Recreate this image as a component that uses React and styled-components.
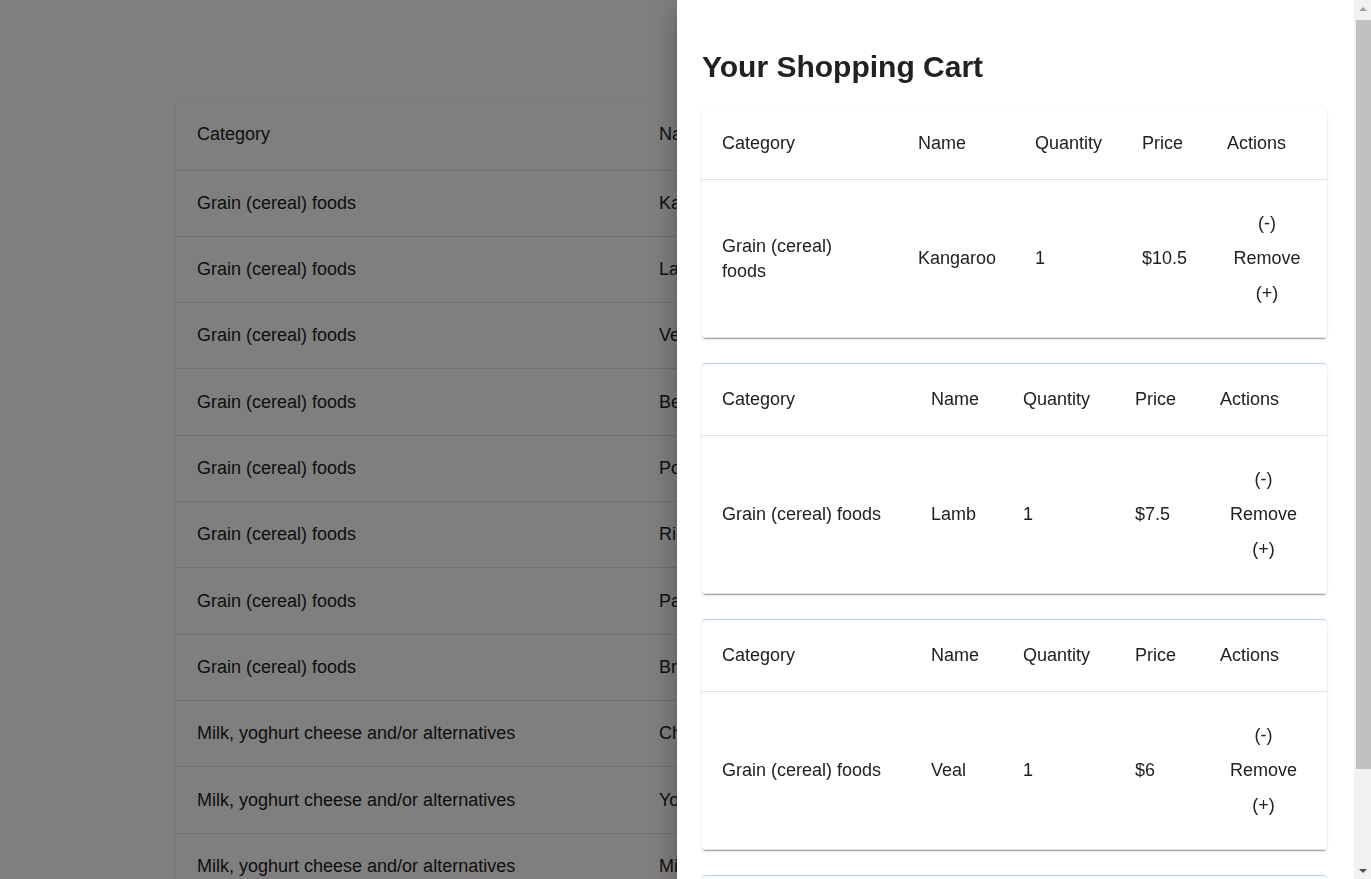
import React from "react";
import styled, { createGlobalStyle } from "styled-components";

const GlobalStyle = createGlobalStyle`
  html, body { margin: 0; padding: 0; height: 100%; overflow: hidden; }
  body {
    font-family: "Liberation Sans", Arial, sans-serif;
    background: #ffffff;
    color: rgba(0, 0, 0, 0.87);
  }
`;

const Page = styled.div`
  padding: 100px 0 0 176px;
`;

const BgPaper = styled.div`
  width: 1019px;
  background: #fff;
  border-radius: 4px;
  box-shadow: 0px 2px 1px -1px rgba(0,0,0,0.2), 0px 1px 1px 0px rgba(0,0,0,0.14), 0px 1px 3px 0px rgba(0,0,0,0.12);
  overflow: hidden;
`;

const Table = styled.table`
  width: 100%;
  border-collapse: collapse;
  table-layout: fixed;
  font-size: 18px;
  line-height: 25px;
`;

const BgHeadCell = styled.th`
  height: 70px;
  box-sizing: border-box;
  padding: 0 21px;
  text-align: left;
  font-weight: 400;
  border-bottom: 1px solid #e0e0e0;
  white-space: nowrap;
  color: #212121;
`;

const BgCell = styled.td`
  height: 66.33px;
  box-sizing: border-box;
  padding: 0 21px;
  border-bottom: 1px solid #e0e0e0;
  white-space: nowrap;
  overflow: hidden;
  color: #212121;
`;

const Backdrop = styled.div`
  position: fixed;
  inset: 0;
  background: rgba(0, 0, 0, 0.5);
`;

const Drawer = styled.aside`
  position: fixed;
  top: 0;
  right: 0;
  bottom: 0;
  width: 694px;
  display: flex;
  background: #fff;
  box-shadow: 0px 8px 10px -5px rgba(0,0,0,0.2), 0px 16px 24px 2px rgba(0,0,0,0.14), 0px 6px 30px 5px rgba(0,0,0,0.12);
`;

const DrawerBody = styled.div`
  flex: 1;
  min-width: 0;
  box-sizing: border-box;
  overflow-y: auto;
  scrollbar-width: none;
  padding: 50px 27px 25px 25px;
  &::-webkit-scrollbar { display: none; }
`;

const ScrollTrack = styled.div`
  width: 17px;
  flex: none;
  display: flex;
  flex-direction: column;
  background: #f1f1f1;
`;

const ArrowBox = styled.div`
  height: 17px;
  flex: none;
  display: flex;
  align-items: center;
  justify-content: center;
`;

const Arrow = styled.span`
  width: 0;
  height: 0;
  border-left: 4px solid transparent;
  border-right: 4px solid transparent;
  ${(p) =>
    p.$up
      ? "border-bottom: 4px solid #a3a3a3;"
      : "border-top: 4px solid #505050;"}
`;

const Thumb = styled.div`
  height: 749px;
  margin: 3px 0 0 2px;
  background: #c1c1c1;
`;

const TrackSpacer = styled.div`
  flex: 1;
`;

const Title = styled.h2`
  margin: 0 0 24px;
  font-size: 30px;
  line-height: 34px;
  font-weight: 700;
  color: #212121;
`;

const Card = styled.div`
  background: #fff;
  border-radius: 4px;
  margin-bottom: 25px;
  border-top: ${(p) => (p.$accent ? "1px solid #add8e6" : "0")};
  box-shadow: 0px 2px 1px -1px rgba(0,0,0,0.2), 0px 1px 1px 0px rgba(0,0,0,0.14), 0px 1px 3px 0px rgba(0,0,0,0.12);
  overflow: hidden;
`;

const HeadCell = styled.th`
  padding: 23px 20px;
  text-align: left;
  font-weight: 400;
  border-bottom: 1px solid #e0e0e0;
  color: #212121;
  white-space: nowrap;
`;

const Cell = styled.td`
  padding: 0 20px;
  vertical-align: middle;
  border-bottom: 1px solid #e0e0e0;
  color: #212121;
`;

const ActionCell = styled(Cell)`
  padding: 26px 20px;
  text-align: center;
`;

const ActionButton = styled.button`
  display: block;
  width: 100%;
  height: 35px;
  padding: 0;
  border: 0;
  background: none;
  font: inherit;
  line-height: 35px;
  color: #212121;
  cursor: pointer;
`;

const TotalRow = styled.div`
  height: 91px;
  display: flex;
  align-items: center;
  justify-content: space-between;
  padding: 0 20px;
  font-size: 18px;
  color: #212121;
`;

const bgRows = [
  ["Grain (cereal) foods", "Kangaroo", "$10.5"],
  ["Grain (cereal) foods", "Lamb", "$7.5"],
  ["Grain (cereal) foods", "Veal", "$6"],
  ["Grain (cereal) foods", "Beef", "$8"],
  ["Grain (cereal) foods", "Pork", "$5.5"],
  ["Grain (cereal) foods", "Rice", "$2"],
  ["Grain (cereal) foods", "Pasta", "$2.5"],
  ["Grain (cereal) foods", "Bread", "$3"],
  ["Milk, yoghurt cheese and/or alternatives", "Cheese", "$4"],
  ["Milk, yoghurt cheese and/or alternatives", "Yoghurt", "$3"],
  ["Milk, yoghurt cheese and/or alternatives", "Milk", "$2"],
];

const cart = [
  { category: "Grain (cereal) foods", name: "Kangaroo", qty: 1, price: "$10.5", cols: [196, 117, 107, 85, 120] },
  { category: "Grain (cereal) foods", name: "Lamb", qty: 1, price: "$7.5", cols: [209, 92, 112, 85, 127] },
  { category: "Grain (cereal) foods", name: "Veal", qty: 1, price: "$6", cols: [209, 92, 112, 85, 127] },
];

function CartItem({ item, accent }) {
  return (
    <Card $accent={accent}>
      <Table>
        <colgroup>
          {item.cols.map((w, i) => (
            <col key={i} style={{ width: w }} />
          ))}
        </colgroup>
        <thead>
          <tr>
            <HeadCell>Category</HeadCell>
            <HeadCell>Name</HeadCell>
            <HeadCell>Quantity</HeadCell>
            <HeadCell>Price</HeadCell>
            <HeadCell>Actions</HeadCell>
          </tr>
        </thead>
        <tbody>
          <tr>
            <Cell>{item.category}</Cell>
            <Cell>{item.name}</Cell>
            <Cell>{item.qty}</Cell>
            <Cell>{item.price}</Cell>
            <ActionCell>
              <ActionButton>(-)</ActionButton>
              <ActionButton>Remove</ActionButton>
              <ActionButton>(+)</ActionButton>
            </ActionCell>
          </tr>
        </tbody>
      </Table>
    </Card>
  );
}

export default function App() {
  return (
    <>
      <GlobalStyle />
      <Page>
        <BgPaper>
          <Table>
            <colgroup>
              <col style={{ width: 462 }} />
              <col style={{ width: 250 }} />
              <col style={{ width: 150 }} />
              <col style={{ width: 157 }} />
            </colgroup>
            <thead>
              <tr>
                <BgHeadCell>Category</BgHeadCell>
                <BgHeadCell>Name</BgHeadCell>
                <BgHeadCell>Price</BgHeadCell>
                <BgHeadCell>Action</BgHeadCell>
              </tr>
            </thead>
            <tbody>
              {bgRows.map((r, i) => (
                <tr key={i}>
                  <BgCell>{r[0]}</BgCell>
                  <BgCell>{r[1]}</BgCell>
                  <BgCell>{r[2]}</BgCell>
                  <BgCell>Add to cart</BgCell>
                </tr>
              ))}
            </tbody>
          </Table>
        </BgPaper>
      </Page>
      <Backdrop />
      <Drawer>
        <DrawerBody>
          <Title>Your Shopping Cart</Title>
          {cart.map((item, i) => (
            <CartItem key={i} item={item} accent={i > 0} />
          ))}
          <Card $accent>
            <TotalRow>
              <span>Total</span>
              <span>$24</span>
            </TotalRow>
          </Card>
        </DrawerBody>
        <ScrollTrack>
          <ArrowBox>
            <Arrow $up />
          </ArrowBox>
          <Thumb />
          <TrackSpacer />
          <ArrowBox>
            <Arrow />
          </ArrowBox>
        </ScrollTrack>
      </Drawer>
    </>
  );
}
